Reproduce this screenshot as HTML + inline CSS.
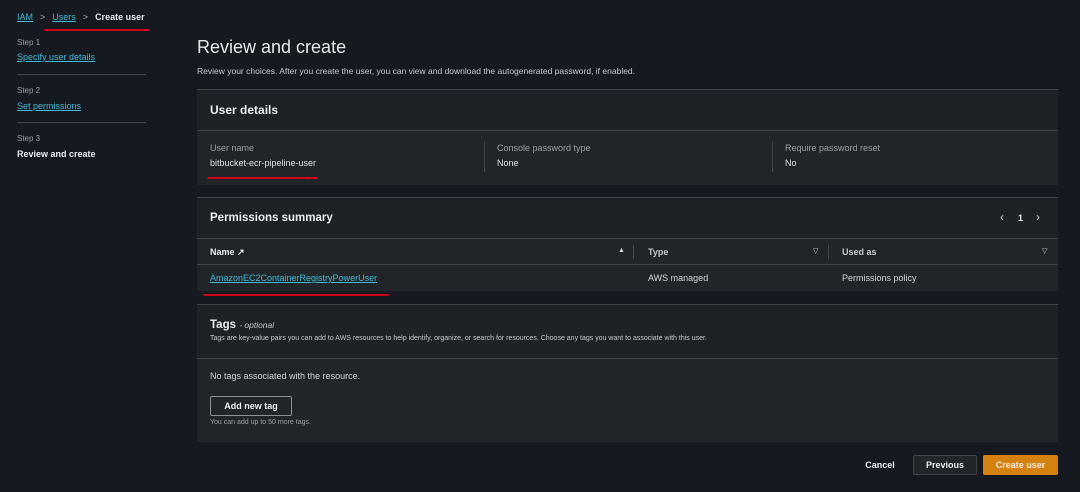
<!DOCTYPE html>
<html><head><style>
body{margin:0;width:1080px;height:492px;background:#16191f;font-family:"Liberation Sans",sans-serif;color:#d1d5db;position:relative;overflow:hidden;font-size:9px}
.a{position:absolute}
.lnk{color:#44b9d6;text-decoration:underline}
.card{position:absolute;left:197px;width:861px;background:#222528;border-top:1px solid #41454b}
.hd{background:#1f2225;border-bottom:1px solid #41454b}
.b{font-weight:bold;color:#eaeded}
.red{position:absolute;height:2px;background:#d0021b;border-radius:2px}
.btn{position:absolute;top:455px;height:20px;border-radius:2px;font-weight:bold;font-size:9px;text-align:center;line-height:20px}
.g{color:#9ba1a7}
</style></head><body>
<div class="a" style="left:17px;top:12px;font-size:9px"><span class="lnk">IAM</span><span style="color:#aaa;margin:0 7px">&gt;</span><span class="lnk">Users</span><span style="color:#aaa;margin:0 7px">&gt;</span><span class="b">Create user</span></div>
<div class="red" style="left:44px;top:29px;width:106px"></div>
<div class="a g" style="left:17px;top:38px;font-size:8px">Step 1</div>
<div class="a lnk" style="left:17px;top:52px">Specify user details</div>
<div class="a" style="left:17px;top:74px;width:129px;height:1px;background:#44474c"></div>
<div class="a g" style="left:17px;top:86px;font-size:8px">Step 2</div>
<div class="a lnk" style="left:17px;top:101px">Set permissions</div>
<div class="a" style="left:17px;top:122px;width:129px;height:1px;background:#44474c"></div>
<div class="a g" style="left:17px;top:134px;font-size:8px">Step 3</div>
<div class="a b" style="left:17px;top:149px">Review and create</div>
<div class="a" style="left:197px;top:37px;font-size:18px;color:#e6e8ea">Review and create</div>
<div class="a" style="left:197px;top:66px;font-size:8.5px;color:#c6c9cc">Review your choices. After you create the user, you can view and download the autogenerated password, if enabled.</div>

<div class="card" style="top:89px;height:95px">
<div class="hd" style="height:40px"><div class="a b" style="left:13px;top:13px;font-size:12px">User details</div></div>
<div class="a g" style="left:13px;top:53px">User name</div><div class="a" style="left:13px;top:68px;color:#e0e2e4">bitbucket-ecr-pipeline-user</div>
<div class="a" style="left:287px;top:52px;width:1px;height:30px;background:#44474c"></div>
<div class="a g" style="left:300px;top:53px">Console password type</div><div class="a" style="left:300px;top:68px;color:#e0e2e4">None</div>
<div class="a" style="left:575px;top:52px;width:1px;height:30px;background:#44474c"></div>
<div class="a g" style="left:588px;top:53px">Require password reset</div><div class="a" style="left:588px;top:68px;color:#e0e2e4">No</div>
</div>
<div class="red" style="left:207px;top:177px;width:111px"></div>

<div class="card" style="top:197px;height:93px">
<div class="hd" style="height:40px"><div class="a b" style="left:13px;top:14px;font-size:11.5px">Permissions summary</div>
<div class="a" style="left:803px;top:12px;font-size:12px;color:#ccc">&lsaquo;</div>
<div class="a b" style="left:821px;top:15px;font-size:9px">1</div>
<div class="a" style="left:839px;top:12px;font-size:12px;color:#ccc">&rsaquo;</div></div>
<div style="height:25px;border-bottom:1px solid #41454b;position:relative;background:#222528">
<div class="a b" style="left:13px;top:8px">Name &#x2197;</div><div class="a" style="left:421px;top:8px;font-size:7px">▲</div>
<div class="a" style="left:436px;top:6px;width:1px;height:14px;background:#44474c"></div>
<div class="a b" style="left:451px;top:8px;color:#c6c9cc">Type</div><div class="a" style="left:616px;top:8px;font-size:7px">▽</div>
<div class="a" style="left:631px;top:6px;width:1px;height:14px;background:#44474c"></div>
<div class="a b" style="left:645px;top:8px;color:#c6c9cc">Used as</div><div class="a" style="left:845px;top:8px;font-size:7px">▽</div></div>
<div class="a lnk" style="left:13px;top:75px">AmazonEC2ContainerRegistryPowerUser</div>
<div class="a" style="left:451px;top:75px">AWS managed</div>
<div class="a" style="left:645px;top:75px">Permissions policy</div>
</div>
<div class="red" style="left:203px;top:294px;width:186px"></div>

<div class="card" style="top:304px;height:137px">
<div class="hd" style="height:53px"><div class="a b" style="left:13px;top:14px;font-size:11.5px">Tags <i style="font-size:8.5px;font-weight:normal;color:#c6c9cc">- optional</i></div>
<div class="a" style="left:13px;top:30px;font-size:7px;color:#c6c9cc">Tags are key-value pairs you can add to AWS resources to help identify, organize, or search for resources. Choose any tags you want to associate with this user.</div></div>
<div class="a" style="left:13px;top:66px">No tags associated with the resource.</div>
<div class="a b" style="left:13px;top:91px;width:82px;height:20px;border:1px solid #8d9196;border-radius:2px;text-align:center;line-height:18px;box-sizing:border-box">Add new tag</div>
<div class="a g" style="left:13px;top:114px;font-size:7px">You can add up to 50 more tags.</div>
</div>

<div class="btn b" style="left:858px;width:44px">Cancel</div>
<div class="btn b" style="left:913px;width:64px;background:#232629;border:1px solid #41454b;box-sizing:border-box;line-height:18px">Previous</div>
<div class="btn" style="left:983px;width:75px;background:#d4810f;color:#f3ece0">Create user</div>
</body></html>
